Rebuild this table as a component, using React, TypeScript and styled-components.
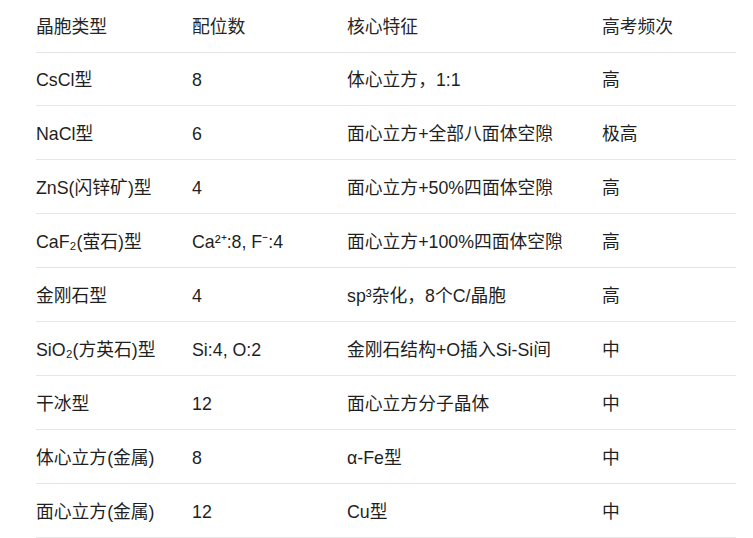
import React from "react";
import styled, { createGlobalStyle } from "styled-components";

const Global = createGlobalStyle`
  html, body { margin: 0; padding: 0; background: #ffffff; }
  body {
    font-family: "Liberation Sans", "Noto Sans CJK SC", sans-serif;
    color: #222222;
  }
`;

const Page = styled.div`
  width: 753px;
  height: 538px;
  overflow: hidden;
  padding-left: 36px;
  box-sizing: border-box;
`;

const Table = styled.table`
  width: 700px;
  border-collapse: collapse;
  table-layout: fixed;
  font-size: 17.8px;
  line-height: 24px;
`;

const Col = styled.col<{ $w: number }>`
  width: ${(p) => p.$w}px;
`;

const HeadCell = styled.th`
  height: 52px;
  padding: 2px 0 0 0;
  box-sizing: border-box;
  text-align: left;
  font-weight: 400;
  vertical-align: middle;
  border-bottom: 1px solid #e6e6e6;
  color: #262626;
`;

const Cell = styled.td`
  height: 53.9px;
  padding: 3px 0 0 0;
  box-sizing: border-box;
  vertical-align: middle;
  border-bottom: 1px solid #e6e6e6;
  white-space: nowrap;
  color: #1f1f1f;
`;

const Text = styled.span`
  display: block;
  height: 24px;
  line-height: 24px;
`;

const rows: string[][] = [
  ["CsCl型", "8", "体心立方，1:1", "高"],
  ["NaCl型", "6", "面心立方+全部八面体空隙", "极高"],
  ["ZnS(闪锌矿)型", "4", "面心立方+50%四面体空隙", "高"],
  ["CaF₂(萤石)型", "Ca²⁺:8, F⁻:4", "面心立方+100%四面体空隙", "高"],
  ["金刚石型", "4", "sp³杂化，8个C/晶胞", "高"],
  ["SiO₂(方英石)型", "Si:4, O:2", "金刚石结构+O插入Si-Si间", "中"],
  ["干冰型", "12", "面心立方分子晶体", "中"],
  ["体心立方(金属)", "8", "α-Fe型", "中"],
  ["面心立方(金属)", "12", "Cu型", "中"],
];

const headers = ["晶胞类型", "配位数", "核心特征", "高考频次"];

export default function App() {
  return (
    <>
      <Global />
      <Page>
        <Table>
          <colgroup>
            <Col $w={156} />
            <Col $w={155} />
            <Col $w={255} />
            <Col $w={134} />
          </colgroup>
          <thead>
            <tr>
              {headers.map((h) => (
                <HeadCell key={h}>
                  <Text>{h}</Text>
                </HeadCell>
              ))}
            </tr>
          </thead>
          <tbody>
            {rows.map((r, i) => (
              <tr key={i}>
                {r.map((c, j) => (
                  <Cell key={j}>
                    <Text>{c}</Text>
                  </Cell>
                ))}
              </tr>
            ))}
          </tbody>
        </Table>
      </Page>
    </>
  );
}
